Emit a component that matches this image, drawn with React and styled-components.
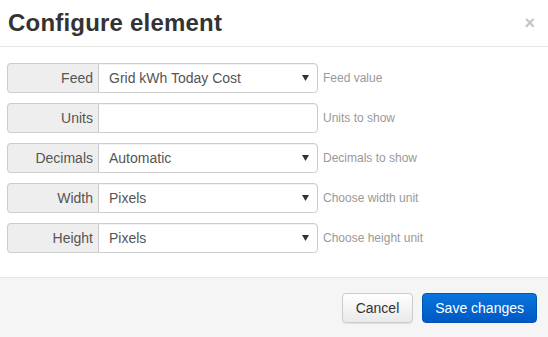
import React from 'react'
import styled, {createGlobalStyle} from 'styled-components'

const GlobalStyle = createGlobalStyle`
  html, body {
    margin: 0;
    padding: 0;
    background: #fff;
    font-family: "Liberation Sans", Arial, sans-serif;
  }
`

const fields = [
  {label: 'Feed', value: 'Grid kWh Today Cost', select: true, help: 'Feed value'},
  {label: 'Units', value: '', select: false, help: 'Units to show'},
  {label: 'Decimals', value: 'Automatic', select: true, help: 'Decimals to show'},
  {label: 'Width', value: 'Pixels', select: true, help: 'Choose width unit'},
  {label: 'Height', value: 'Pixels', select: true, help: 'Choose height unit'}
]

const Caret = () => (
  <svg width="7" height="6" viewBox="0 0 7 6">
    <path d="M0 0 L7 0 L3.5 6 Z" fill="#333" />
  </svg>
)

export default function App () {
  return (
    <Modal>
      <GlobalStyle />
      <Header>
        <Title>Configure element</Title>
        <Close>×</Close>
      </Header>
      <Body>
        {fields.map(f => (
          <Row key={f.label}>
            <Group>
              <Addon>{f.label}</Addon>
              <Control>
                <span>{f.value}</span>
                {f.select && <Caret />}
              </Control>
            </Group>
            <Help>{f.help}</Help>
          </Row>
        ))}
      </Body>
      <Footer>
        <Button>Cancel</Button>
        <Button primary>Save changes</Button>
      </Footer>
    </Modal>
  )
}

const Modal = styled.div`
  width: 548px;
  height: 337px;
  display: flex;
  flex-direction: column;
  background: #fff;
`
const Header = styled.div`
  height: 46px;
  border-bottom: 1px solid #e5e5e5;
  display: flex;
  align-items: center;
  justify-content: space-between;
  padding: 0 13px 0 8px;
`
const Title = styled.h3`
  margin: 0;
  font-size: 24px;
  font-weight: bold;
  color: #333;
  line-height: 1;
  letter-spacing: 0.2px;
`
const Close = styled.span`
  font-size: 18px;
  font-weight: bold;
  color: #c4c4c4;
  line-height: 1;
`
const Body = styled.div`
  padding: 16px 0 0 7px;
  display: flex;
  flex-direction: column;
  gap: 10px;
  height: 230px;
  box-sizing: border-box;
`
const Row = styled.div`
  display: flex;
  align-items: center;
  gap: 5px;
`
const Group = styled.div`
  display: flex;
  width: 311px;
  height: 30px;
`
const Addon = styled.div`
  width: 91px;
  box-sizing: border-box;
  background: #eee;
  border: 1px solid #ccc;
  border-right: 0;
  border-radius: 4px 0 0 4px;
  color: #555;
  font-size: 14px;
  display: flex;
  align-items: center;
  justify-content: flex-end;
  padding-right: 5px;
`
const Control = styled.div`
  flex: 1;
  box-sizing: border-box;
  border: 1px solid #ccc;
  border-radius: 0 4px 4px 0;
  color: #555;
  font-size: 14px;
  display: flex;
  align-items: center;
  justify-content: space-between;
  padding: 0 8px 0 10px;
  box-shadow: inset 0 1px 1px rgba(0,0,0,.05);
`
const Help = styled.span`
  font-size: 12px;
  color: #999;
`
const Footer = styled.div`
  flex: 1;
  background: #f5f5f5;
  border-top: 1px solid #e5e5e5;
  display: flex;
  justify-content: flex-end;
  align-items: flex-start;
  gap: 9px;
  padding: 15px 11px 0 0;
`
const Button = styled.button`
  height: 30px;
  padding: 0 ${p => p.primary ? '12px' : '13px'};
  font-family: inherit;
  font-size: 14px;
  border-radius: 4px;
  border: 1px solid ${p => p.primary ? '#0055b3' : '#ccc'};
  color: ${p => p.primary ? '#fff' : '#333'};
  background: ${p => p.primary
    ? 'linear-gradient(#0a75dd, #0058c4)'
    : 'linear-gradient(#fff, #e9e9e9)'};
  box-shadow: ${p => p.primary ? 'none' : '0 1px 1px rgba(0,0,0,.08)'};
`
